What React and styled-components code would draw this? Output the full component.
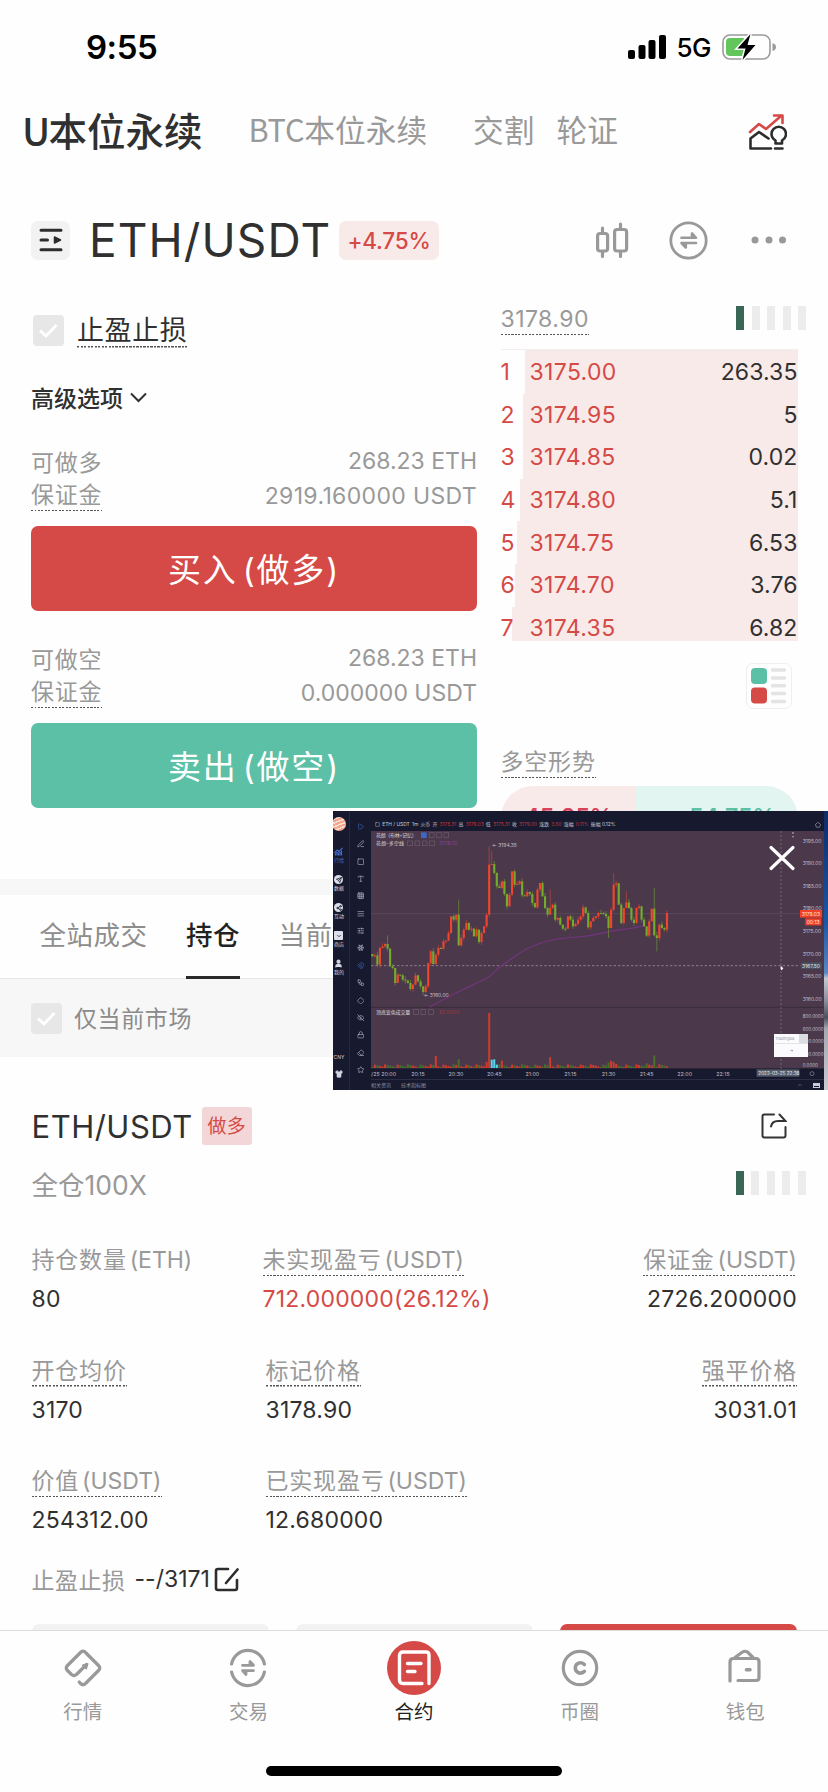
import React from "react";
import styled, { createGlobalStyle } from "styled-components";
import {
  Play, PenLine, Square, Type, Grid3x3, AlignJustify, SlidersHorizontal, Snowflake, Magnet,
  Workflow, Diamond, EyeOff, Lock, Eraser, Star, ChartNoAxesCombined, Send,
  Share2, ChevronDown, User, Shirt, Pentagon, ChevronUp,
} from "lucide-react";

const red = "#d54a46";
const green = "#5bc0a6";
const dark = "#303030";
const gray = "#999999";
const light = "#f7f7f7";
const navy = "#171a2e";

const GlobalStyle = createGlobalStyle`
  * { box-sizing: border-box; }
  body {
    margin: 0;
    background: #fefefe;
    color: ${dark};
    font-family: Inter, "Noto Sans CJK SC", sans-serif;
  }
`;

const Screen = styled.div`
  position: relative;
  width: 828px;
  height: 1792px;
  overflow: hidden;
  display: flex;
  flex-direction: column;
`;

/* ---------- status bar ---------- */
const StatusBar = styled.div`
  height: 94px;
  flex: none;
  padding: 0 52px 0 86px;
  display: flex;
  align-items: center;
  color: #000;
`;
const Clock = styled.div`
  font-size: 33px;
  font-weight: 600;
  letter-spacing: -0.5px;
  flex: 1;
`;
const Network = styled.div`
  font-size: 26px;
  font-weight: 500;
  letter-spacing: -0.5px;
  margin: 1px 11px 0 10px;
`;

/* ---------- market tabs ---------- */
const MarketTabs = styled.div`
  height: 76px;
  flex: none;
  padding: 0 41px 0 22px;
  display: flex;
  align-items: center;
`;
const MarketTab = styled.div`
  font-family: "Noto Sans CJK SC", sans-serif;
  font-size: ${({ $active }) => ($active ? "38.5px" : "30.7px")};
  font-weight: ${({ $active }) => ($active ? 500 : 400)};
  color: ${({ $active }) => ($active ? dark : gray)};
  margin-right: ${({ $gap }) => $gap}px;
  line-height: 50px;
  padding-bottom: 7px;
  white-space: nowrap;
`;
const Narrow = styled.span`
  letter-spacing: ${({ $tight }) => $tight}px;
`;
const Spacer = styled.div`
  flex: 1;
`;

/* ---------- pair header ---------- */
const PairHeader = styled.div`
  height: 130px;
  flex: none;
  padding: 10px 40px 0 31px;
  display: flex;
  align-items: center;
`;
const MenuButton = styled.div`
  width: 39px;
  height: 39px;
  border-radius: 7px;
  background: #f2f2f2;
  display: flex;
  align-items: center;
  justify-content: center;
`;
const PairName = styled.div`
  width: 239px;
  margin: 0 11px 0 19px;
  font-size: 46px;
  line-height: 56px;
  letter-spacing: 1.1px;
  white-space: nowrap;
`;
const Change = styled.div`
  width: 100px;
  height: 39px;
  line-height: 39px;
  border-radius: 7px;
  background: #f9eaea;
  color: ${red};
  font-size: 22.5px;
  font-weight: 500;
  letter-spacing: -0.2px;
  text-align: center;
`;
const HeaderIcons = styled.div`
  display: flex;
  align-items: center;
  gap: 40px;
`;

/* ---------- trade panel ---------- */
const Trade = styled.div`
  height: 579px;
  flex: none;
  padding: 0 22px 0 31px;
  display: flex;
  gap: 23.5px;
`;
const OrderForm = styled.div`
  width: 446px;
  padding-top: 10px;
`;
const Book = styled.div`
  flex: 1;
`;
const CheckRow = styled.div`
  display: flex;
  align-items: center;
  gap: 13px;
  height: 41px;
  padding-left: ${({ $indent }) => $indent || 0}px;
  font-size: ${({ $size }) => $size}px;
  letter-spacing: 0.6px;
`;
const Check = styled.div`
  width: 31px;
  height: 31px;
  border-radius: 4px;
  background: #e7e7e7;
  display: flex;
  align-items: center;
  justify-content: center;
`;
const Dotted = styled.span`
  display: inline-block;
  line-height: ${({ $lh }) => $lh || 30}px;
  padding-bottom: 1px;
  background: repeating-linear-gradient(90deg, #555 0 2px, transparent 2px 3.5px) bottom left / 100% 1.5px no-repeat;
`;
const Unit = styled.span`
  letter-spacing: 0;
  word-spacing: -3.5px;
`;
const Advanced = styled.div`
  display: flex;
  align-items: center;
  gap: 7px;
  height: 40px;
  margin: 26px 0;
  font-size: 23px;
  font-weight: 500;
`;
const Line = styled.div`
  height: 35px;
  display: flex;
  align-items: center;
  justify-content: space-between;
  color: ${gray};
  font-size: 23px;
  letter-spacing: 0.8px;
`;
const Amount = styled.span`
  letter-spacing: ${({ $wide }) => ($wide ? "0.35px" : "0")};
`;
const BigButton = styled.div`
  height: 85px;
  margin: 13px 0 29px;
  padding-bottom: 2px;
  border-radius: 7px;
  background: ${({ $color }) => $color};
  color: #fff;
  font-size: 33px;
  letter-spacing: 1.8px;
  word-spacing: -6px;
  display: flex;
  align-items: center;
  justify-content: center;
`;
const BookTop = styled.div`
  height: 39px;
  display: flex;
  align-items: center;
  justify-content: space-between;
  color: ${gray};
  font-size: 23px;
  letter-spacing: 0.45px;
  div { margin-top: -3px; }
`;
const Meter = styled.div`
  display: flex;
  gap: 7.5px;
  i {
    width: 8px;
    height: 23.5px;
    background: #ececec;
  }
  i:first-child { background: #3a6655; }
`;
const Asks = styled.div`
  width: 297px;
  height: 292px;
  margin-top: 10px;
  overflow: hidden;
  border-top: 1px solid #f2eeee;
`;
const Ask = styled.div`
  height: 42.6px;
  display: flex;
  align-items: center;
  font-size: 23px;
  letter-spacing: 0.1px;
  background: linear-gradient(90deg, transparent ${({ $from }) => $from}px, #f9eaea ${({ $from }) => $from}px);
  &:first-child { height: 43.6px; }
  b {
    width: 29px;
    font-weight: 400;
    color: ${red};
  }
  em {
    flex: 1;
    font-style: normal;
    letter-spacing: 0.35px;
    color: ${red};
  }
`;
const BookMode = styled.div`
  width: 46px;
  height: 46px;
  margin: 22px 0 0 245px;
  border: 1.5px solid #eeeeee;
  border-radius: 7px;
  display: flex;
  align-items: center;
  justify-content: center;
`;
const Trend = styled.div`
  margin-top: 38px;
  color: ${gray};
  font-size: 23px;
  letter-spacing: 0.8px;
`;
const Gauge = styled.div`
  width: 297px;
  height: 64px;
  margin-top: 8px;
  border-radius: 32px;
  overflow: hidden;
  display: flex;
  font-size: 23px;
  font-weight: 600;
  line-height: 62px;
  div {
    flex: 1;
    padding-right: 22px;
    text-align: right;
    background: #e3f5f1;
    color: ${green};
  }
  div:first-child {
    flex: none;
    width: 135px;
    padding: 0 0 0 24px;
    text-align: left;
    background: #f9eaea;
    color: #d5445a;
  }
`;

/* ---------- positions ---------- */
const Tabs = styled.div`
  height: 100px;
  flex: none;
  padding-left: 39.5px;
  border-top: 16px solid ${light};
  border-bottom: 1px solid #e6e6e6;
  display: flex;
  gap: 38.5px;
`;
const Tab = styled.div`
  height: 84px;
  line-height: 80px;
  font-size: 26.5px;
  letter-spacing: 0.5px;
  font-weight: ${({ $active }) => ($active ? 500 : 400)};
  color: ${({ $active }) => ($active ? "#222" : "#8d8d8d")};
  border-bottom: 3px solid ${({ $active }) => ($active ? "#2a2a2a" : "transparent")};
`;
const Filter = styled.div`
  height: 78px;
  flex: none;
  padding: 19px 31px;
  background: ${light};
  color: #8b8b8b;
  span { margin: -3px 0 0 -1px; }
`;
const Position = styled.div`
  flex: 1;
  padding: 41px 31px 0 31.5px;
`;
const PositionHead = styled.div`
  height: 56px;
  display: flex;
  align-items: center;
  padding-right: 10px;
  font-size: 31px;
  letter-spacing: 0.5px;
`;
const Side = styled.div`
  width: 50px;
  height: 38px;
  margin-left: 9px;
  border-radius: 3px;
  background: #f3d6d7;
  color: ${red};
  font-size: 19px;
  line-height: 39px;
  letter-spacing: 0.3px;
  text-align: center;
`;
const Leverage = styled.div`
  height: 58px;
  margin-right: -8.5px;
  display: flex;
  align-items: center;
  justify-content: space-between;
  color: ${gray};
  font-size: 26.5px;
`;
const Stats = styled.div`
  margin-top: 31px;
  display: grid;
  grid-template-columns: 231px 1fr auto;
  grid-auto-rows: 110.7px;
`;
const Stat = styled.div`
  padding-left: ${({ $indent }) => $indent || 0}px;
  text-align: ${({ $right }) => ($right ? "right" : "left")};
  font-size: 23px;
  line-height: 34px;
  letter-spacing: 0.2px;
  color: ${({ $red }) => ($red ? red : dark)};
`;
const StatLabel = styled.div`
  height: 39px;
  color: ${gray};
  letter-spacing: 0.8px;
`;
const StopLine = styled.div`
  height: 34px;
  margin-top: -13px;
  display: flex;
  align-items: center;
  font-size: 23px;
  span {
    color: ${gray};
    margin-right: 9px;
    letter-spacing: 0.5px;
  }
  svg { margin-left: 4px; }
`;
const Actions = styled.div`
  margin-top: 28px;
  display: flex;
  gap: 27px;
  div {
    flex: 1;
    height: 60px;
    border-radius: 7px;
    background: #f2f2f2;
  }
  div:last-child { background: ${red}; }
`;

/* ---------- bottom bar ---------- */
const Nav = styled.div`
  position: absolute;
  left: 0;
  right: 0;
  bottom: 0;
  height: 162px;
  padding-top: 10px;
  background: #fefefe;
  border-top: 1.5px solid #dcdcdc;
  display: grid;
  grid-template-columns: repeat(5, 1fr);
  grid-template-rows: 125px auto;
`;
const NavItem = styled.div`
  display: flex;
  flex-direction: column;
  align-items: center;
  font-size: 19.5px;
  line-height: 34px;
  color: ${({ $active }) => ($active ? "#222" : gray)};
`;
const NavIcon = styled.div`
  width: 54px;
  height: 54px;
  border-radius: 50%;
  background: ${({ $active }) => ($active ? red : "none")};
  display: flex;
  align-items: center;
  justify-content: center;
`;
const HomeBar = styled.div`
  grid-column: 1 / -1;
  justify-self: center;
  width: 296px;
  height: 10px;
  border-radius: 5px;
  background: #000;
`;

/* ---------- floating chart window ---------- */
const Pip = styled.div`
  position: absolute;
  left: 333px;
  top: 811px;
  width: 495px;
  height: 279px;
  overflow: hidden;
  background: ${navy};
  color: #c9cbd8;
  display: flex;
  font-size: 5px;
  line-height: 7px;
`;
const AppRail = styled.div`
  width: 17px;
  flex: none;
  border-right: 1px solid #25283e;
  padding: 6px 4px 0 0;
  display: flex;
  flex-direction: column;
  align-items: center;
`;
const Avatar = styled.div`
  width: 14px;
  height: 14px;
  margin: 0 0 16px -1px;
  border-radius: 50%;
  background: repeating-linear-gradient(160deg, #f2a58c 0 2px, #f9dccb 2px 3.5px);
  flex: none;
`;
const RailItem = styled.div`
  height: 28px;
  display: flex;
  flex-direction: column;
  align-items: center;
  gap: 1px;
  white-space: nowrap;
  color: ${({ $active }) => ($active ? "#4470d8" : "#d4d6e4")};
`;
const RailIcon = styled.div`
  width: 9px;
  height: 9px;
  border-radius: ${({ $round }) => ($round ? "50%" : "1px")};
  background: ${({ $solid }) => ($solid ? "#dcdeea" : "none")};
  color: ${({ $solid }) => ($solid ? navy : "inherit")};
  display: flex;
  align-items: center;
  justify-content: center;
`;
const RailFoot = styled.div`
  margin-top: 67px;
  display: flex;
  flex-direction: column;
  align-items: center;
  gap: 9px;
`;
const ToolRail = styled.div`
  width: 21px;
  flex: none;
  padding-top: 7px;
`;
const Tool = styled.div`
  height: 17.36px;
  display: flex;
  align-items: center;
  justify-content: center;
  color: ${({ $active }) => ($active ? "#3f63b8" : "#b4b7c8")};
`;
const PipMain = styled.div`
  width: 453px;
  flex: none;
`;
const PipTop = styled.div`
  height: 20px;
  padding: 7px 3px 0 4px;
  display: flex;
  align-items: center;
  gap: 2.2px;
  font-size: 4.9px;
  white-space: nowrap;
  span, b { flex: none; }
  b {
    font-weight: 400;
    color: #c33338;
  }
  svg:last-child { margin-left: auto; }
`;
const PipFoot = styled.div`
  height: 11px;
  padding: 0 4px 0 0;
  border-top: 1px solid #2b2e44;
  display: flex;
  align-items: center;
  gap: 10px;
  color: #8b8ea0;
`;
const FootPanel = styled.div`
  width: 7px;
  height: 5px;
  border: 1px solid #c9cbd8;
  border-top-width: 3px;
`;
const Wallpaper = styled.div`
  flex: 1;
  background: linear-gradient(#0f2b66 0, #1d56a6 40%, #5c86bd 58%, #c5c8d0 60%, #8b8f9c 68%, #4c4f5e 74%, #a6a8b2 78%, #c9cad0 100%);
`;
const Close = styled.svg`
  position: absolute;
  left: 435px;
  top: 34px;
`;
const Note = styled.div`
  position: absolute;
  left: 441px;
  top: 223px;
  width: 34px;
  height: 23px;
  background: linear-gradient(90deg, transparent 25px, #dcdce3 25px) top / 100% 9px no-repeat #fbfbfd;
  color: #9a9aa5;
  font-size: 4px;
  line-height: 9px;
  padding-left: 1px;
  p {
    margin: 0;
    text-align: center;
    line-height: 13px;
    border-top: 1px solid #e2e2e8;
    color: #555;
  }
`;

const asks = [
  [1, "3175.00", "263.35", 24],
  [2, "3174.95", "5", 22],
  [3, "3174.85", "0.02", 22],
  [4, "3174.80", "5.1", 19],
  [5, "3174.75", "6.53", 16],
  [6, "3174.70", "3.76", 14],
  [7, "3174.35", "6.82", 11],
];

// closing level of every one minute bar, in chart units from the top
const closes = [
  455, 452, 480, 430, 425, 418, 432, 485, 490, 535, 510, 512, 525, 528, 535, 553, 540, 512, 530, 545,
  562, 545, 475, 440, 478, 450, 430, 432, 410, 408, 385, 335, 345, 330, 422, 400, 375, 355, 375, 372,
  395, 375, 412, 385, 365, 330, 180, 178, 205, 245, 250, 230, 268, 305, 270, 200, 240, 238, 230, 272,
  275, 262, 268, 295, 308, 255, 235, 275, 310, 330, 310, 300, 345, 340, 360, 372, 372, 335, 345, 365,
  358, 345, 335, 308, 325, 368, 350, 340, 335, 325, 325, 328, 335, 370, 315, 240, 236, 300, 355, 310,
  293, 310, 345, 355, 310, 305, 345, 365, 393, 350, 312, 392, 400, 360, 370, 375, 325,
];
const highs = { 6: 392, 34: 285, 46: 125, 47: 140, 70: 255, 95: 205, 100: 260, 111: 250 };
const lows = { 20: 572, 93: 400, 112: 440 };
const volumes = { 25: 36, 34: 26, 46: 165, 45: 18, 47: 25, 48: 26, 49: 10, 51: 22, 70: 32, 93: 16, 94: 22, 95: 18, 96: 12, 111: 38, 108: 14 };
const cyanBars = [47, 48, 49];
const step = 7.62;

const prices = ["3195.00", "3190.00", "3185.00", "3180.00", "3175.00", "3170.00", "3165.00", "3160.00"];
const volumeTicks = [["800.0000", 633], ["600.0000", 672], ["400.0000", 710], ["200.0000", 749], ["0.0000", 780]];
const times = [["3/25 20:00", 157], ["20:15", 265], ["20:30", 379], ["20:45", 494], ["21:00", 608], ["21:15", 722], ["21:30", 837], ["21:45", 951], ["22:00", 1065], ["22:15", 1180]];

function CheckMark() {
  return (
    <Check>
      <svg width="19" height="16" viewBox="0 0 19 16" fill="none" stroke="#fff" strokeWidth="2.8">
        <path d="M1 7.5 L7 13 L17.5 2" />
      </svg>
    </Check>
  );
}

function Signal() {
  return <Meter><i /><i /><i /><i /><i /></Meter>;
}

function Candles() {
  return closes.map((close, i) => {
    const open = i ? closes[i - 1] : 448;
    const up = close < open;
    const color = up ? "#ee452c" : "#74ab2b";
    const top = Math.min(open, close);
    const bottom = Math.max(open, close);
    const x = 128 + i * step;
    const vol = volumes[i] || 3 + ((i * 7) % 9);
    return (
      <g key={i}>
        <path
          d={`M${x} ${highs[i] || top - ((i * 5) % 11)} V${lows[i] || bottom + ((i * 3) % 10)}`}
          stroke={color}
          strokeWidth="1.6"
        />
        <rect x={x - 3.2} y={top} width="6.4" height={Math.max(bottom - top, 3)} fill={color} />
        <rect x={x - 3} y={790 - vol} width="6" height={vol} fill={cyanBars.includes(i) ? "#59d8ee" : up ? "#d23a2a" : "#47702c"} />
      </g>
    );
  });
}

function Chart() {
  return (
    <svg width="453" height="248" viewBox="124 79 1359 744" fontSize="16" fontFamily='Inter, "Noto Sans CJK SC", sans-serif' fill="#c3bcc6" display="block">
      <rect x="124" y="79" width="1359" height="713" fill="#4b394b" />
      <rect x="124" y="792" width="1359" height="31" fill={navy} />
      <path d="M124 608 H1483" stroke="#3a2c3c" strokeWidth="3" />
      <path d="M124 327 H1412" stroke="#5f5060" strokeWidth="2" />
      <path d="M124 483 H1412" stroke="#978b98" strokeWidth="2.5" strokeDasharray="7 6" />
      <path d="M1354 79 V792" stroke="#8a7f8c" strokeWidth="2" strokeDasharray="6 6" />
      <path
        d="M300 607 C340 585 360 575 385 562 S455 530 472 520 S500 492 520 480 S570 440 610 424 S680 401 745 397 S810 383 874 375 S920 368 944 362"
        fill="none"
        stroke="#74347e"
        strokeWidth="3.5"
      />
      <Candles />

      <g fontSize="15" fill="#dcd8df">
        <text x="139" y="96" textLength="122">花颜（布林+记忆）</text>
        <text x="139" y="121" textLength="84">花颜-多空线</text>
        <text x="139" y="627" textLength="103">顶底变色成交量</text>
      </g>
      <rect x="274" y="83" width="17" height="17" fill="#3e68c8" />
      <g fill="none" stroke="#6c5d6d" strokeWidth="2">
        {[299, 321, 343].map((x) => <rect key={x} x={x} y="84" width="14" height="14" />)}
        {[234, 256, 278, 300].map((x) => <rect key={x} x={x} y="109" width="14" height="14" />)}
        {[252, 274, 297].map((x) => <rect key={x} x={x} y="615" width="14" height="14" />)}
      </g>
      <text x="328" y="121" fill="#8a3c9a" fontSize="15">3178.02</text>
      <text x="328" y="627" fill="#a23338" fontSize="15">82.0000</text>
      <text x="487" y="128" fontSize="15">← 3194.35</text>
      <text x="282" y="576" fontSize="15">← 3160.00</text>

      {prices.map((p, i) => <text key={p} x="1419" y={114 + i * 67.8} fontSize="15">{p}</text>)}
      {volumeTicks.map(([label, y]) => (
        <text key={label} x="1419" y={y + 6} fontSize="13.5">{label}</text>
      ))}
      {times.map(([label, x]) => <text key={label} x={x} y="814" textAnchor="middle">{label}</text>)}

      <rect x="1411" y="316" width="66" height="23" fill="#f0402a" />
      <text x="1416" y="333" fill="#ffe6df" fontSize="15">3179.03</text>
      <rect x="1427" y="341" width="48" height="21" fill="#f0402a" />
      <text x="1431" y="357" fill="#ffe6df" fontSize="15">00:13</text>
      <rect x="1414" y="473" width="62" height="20" fill="#4a5060" />
      <text x="1417" y="489" fill="#e5e5ea" fontSize="15">3167.50</text>
      <rect x="1281" y="794" width="128" height="22" fill="#555b69" />
      <text x="1286" y="811" fill="#eceef2" fontSize="14">2022-03-25 22:38</text>
      <circle cx="1447" cy="807" r="6" fill="none" stroke="#8b8ea0" strokeWidth="2" />
      <path d="M1390 83 V98" stroke="#c3bcc6" strokeWidth="4" strokeDasharray="4 7" />
      <path d="M1353 483 L1361 491 L1356 497 L1353 494 Z" fill="#fff" />
    </svg>
  );
}

const tools = [Play, PenLine, Square, Type, Grid3x3, AlignJustify, SlidersHorizontal, Snowflake, Magnet, Workflow, Diamond, EyeOff, Lock, Eraser, Star];
const railItems = [
  { Icon: ChartNoAxesCombined, label: "行情" },
  { Icon: Send, label: "数据", solid: true, round: true },
  { Icon: Share2, label: "互动", solid: true, round: true },
  { Icon: ChevronDown, label: "商店", solid: true },
  { Icon: User, label: "我的", fill: "#dcdeea" },
];

function FloatingChart() {
  return (
    <Pip>
      <AppRail>
        <Avatar />
        {railItems.map(({ Icon, label, solid, round, fill }, i) => (
          <RailItem key={label} $active={i === 0}>
            <RailIcon $solid={solid} $round={round}>
              <Icon size={solid ? 6 : 9} strokeWidth={3} fill={fill || "none"} />
            </RailIcon>
            {label}
          </RailItem>
        ))}
        <RailFoot>
          CNY
          <Shirt size={8} fill="#d4d6e4" />
        </RailFoot>
      </AppRail>
      <ToolRail>
        {tools.map((Icon, i) => (
          <Tool key={i} $active={i === 0 || i === 8}><Icon size={7.5} /></Tool>
        ))}
      </ToolRail>
      <PipMain>
        <PipTop>
          <Square size={5} /> <span>ETH / USDT</span> <span>1m</span> <span>火币</span>
          <span>开</span> <b>3175.31</b> <span>高</span> <b>3179.03</b> <span>低</span> <b>3175.31</b>
          <span>收</span> <b>3179.00</b> <span>涨跌</span> <b>3.50</b> <span>涨幅</span> <b>0.11%</b> <span>振幅 0.12%</span>
          <Pentagon size={6} />
        </PipTop>
        <Chart />
        <PipFoot>
          <span>相关资讯</span>
          <span>技术指标图</span>
          <Spacer />
          <ChevronUp size={6} />
          <FootPanel />
        </PipFoot>
      </PipMain>
      <Wallpaper />
      <Note>TradingBa<p>→</p></Note>
      <Close width="28" height="26" viewBox="0 0 28 26" stroke="#fff" strokeWidth="3.2" strokeLinecap="round">
        <path d="M3 2.5 L25 23.5 M25 2.5 L3 23.5" />
      </Close>
    </Pip>
  );
}

function BottomNav() {
  return (
    <Nav>
      <NavItem>
        <NavIcon>
          <svg width="40" height="40" viewBox="0 0 40 40" fill="none" stroke={gray} strokeWidth="3.2" strokeLinecap="round" strokeLinejoin="round">
            <path d="M23.5 16.5 L13.5 26.5 Q11 28.5 8.5 26.5 L4 22 Q2.5 20 4 18 L18 4 Q20 2.2 22 4 L36 18 Q37.5 20 36 22 L22.5 35.5 Q20 38 17.5 35.5 L16.3 34" />
            <path d="M19.5 17 L25 15.5 L23.5 21 Z" fill={gray} strokeWidth="1" />
          </svg>
        </NavIcon>
        行情
      </NavItem>
      <NavItem>
        <NavIcon>
          <svg width="40" height="40" viewBox="0 0 40 40" fill="none" stroke={gray} strokeWidth="3.2" strokeLinecap="round" strokeLinejoin="round">
            <path d="M3.6 16 A16.7 16.7 0 0 1 36.4 16 M3.6 24 A16.7 16.7 0 0 0 36.4 24" />
            <path d="M14.5 17.3 H25.5 L22 13.5 V17 M25.5 22.6 H14.5 L18 26.5 V23" strokeWidth="2.8" />
          </svg>
        </NavIcon>
        交易
      </NavItem>
      <NavItem $active>
        <NavIcon $active>
          <svg width="38" height="38" viewBox="0 0 38 38" fill="none" stroke="#fff" strokeWidth="3.4" strokeLinecap="round" strokeLinejoin="round">
            <path d="M34 34.5 V6 Q34 3 31 3 H8 Q4.5 3 4.5 6.5 V31 Q4.5 34.5 8 34.5 H27" />
            <path d="M12.5 14.5 H26 M12.5 22.5 H20" />
          </svg>
        </NavIcon>
        合约
      </NavItem>
      <NavItem>
        <NavIcon>
          <svg width="40" height="40" viewBox="0 0 40 40" fill="none" stroke={gray}>
            <circle cx="20" cy="20" r="16.7" strokeWidth="3.2" />
            <path d="M24.4 16.5 A5.2 5.2 0 1 0 24.4 23.3" strokeWidth="3.6" strokeLinecap="round" />
          </svg>
        </NavIcon>
        币圈
      </NavItem>
      <NavItem>
        <NavIcon>
          <svg width="40" height="40" viewBox="0 0 40 40" fill="none" stroke={gray} strokeWidth="3.2" strokeLinecap="round" strokeLinejoin="round">
            <path d="M5 33 V14 Q5 10.5 8.5 10.5 H31 Q34 10.5 34 14 V29.5 Q34 32.5 31 32.5 H13" />
            <path d="M10 9.5 L17.5 4 Q20 2.5 22.5 4 L28 9.5" />
            <path d="M21.5 21.8 H25" strokeWidth="3.6" />
          </svg>
        </NavIcon>
        钱包
      </NavItem>
      <HomeBar />
    </Nav>
  );
}

function App() {
  return (
    <Screen>
      <GlobalStyle />
      <StatusBar>
        <Clock>9:55</Clock>
        <svg width="38" height="24" viewBox="0 0 38 24">
          <rect x="0" y="15" width="7" height="9" rx="2" />
          <rect x="10.5" y="10" width="7" height="14" rx="2" />
          <rect x="20.5" y="5" width="7" height="19" rx="2" />
          <rect x="31" y="0" width="7" height="24" rx="2" />
        </svg>
        <Network>5G</Network>
        <svg width="54" height="28" viewBox="0 0 54 28">
          <rect x="1" y="2" width="47" height="24" rx="7" fill="none" stroke="#9b9b9b" strokeWidth="1.6" />
          <path d="M50.5 10 Q54 11 54 14 Q54 17 50.5 18 Z" fill="#9b9b9b" />
          <path d="M8 5 H22 V23 H8 Q4 23 4 19 V9 Q4 5 8 5 Z" fill="#62c65c" />
          <path d="M28.5 1 L15.5 15.5 H23.5 L20.5 27 L33.5 12 H25.5 Z" stroke="#fff" strokeWidth="3" />
          <path d="M28.5 1 L15.5 15.5 H23.5 L20.5 27 L33.5 12 H25.5 Z" />
        </svg>
      </StatusBar>

      <MarketTabs>
        <MarketTab $active $gap={46}><Narrow $tight={-1.8}>U</Narrow>本位永续</MarketTab>
        <MarketTab $gap={46}><Narrow $tight={-0.2}>BTC</Narrow>本位永续</MarketTab>
        <MarketTab $gap={22}>交割</MarketTab>
        <MarketTab $gap={0}>轮证</MarketTab>
        <Spacer />
        <svg width="39" height="38" viewBox="0 0 39 38" fill="none" strokeWidth="2.6" strokeLinecap="round" strokeLinejoin="round">
          <path d="M2 19 L11 11 L18 16 L33 3" stroke={red} />
          <path d="M26 2.5 H34.5 V10" stroke={red} />
          <path d="M23 35.5 H2.5 V25.5 L11 19 L20.5 25.5 M27 35.5 H34.5" stroke="#2c2c2c" />
          <path d="M27.5 30.5 V27.5 Q23.5 25 23.5 21 A7.2 7.2 0 0 1 38 21 Q38 25 34 27.5 V30.5 Z" stroke="#2c2c2c" />
        </svg>
      </MarketTabs>

      <PairHeader>
        <MenuButton>
          <svg width="24" height="24" viewBox="0 0 24 24" stroke="#2d2d2d" strokeWidth="3" strokeLinecap="round">
            <path d="M2 2.3 H22 M2 12 H8.5 M2 21.7 H22" />
            <path d="M15.5 9 V15 L21.5 12 Z" fill="#2d2d2d" strokeWidth="1.5" strokeLinejoin="round" />
          </svg>
        </MenuButton>
        <PairName>ETH/USDT</PairName>
        <Change>+4.75%</Change>
        <Spacer />
        <HeaderIcons>
          <svg width="34" height="38" viewBox="0 0 34 38" fill="none" stroke={gray} strokeWidth="3.2" strokeLinecap="round">
            <rect x="2.6" y="12.5" width="10" height="17.5" rx="2.5" />
            <rect x="19.6" y="8.5" width="12" height="21.5" rx="2.5" />
            <path d="M7.5 7 V11 M7.5 31 V35.5 M25.5 3 V7 M25.5 31 V35.5" />
          </svg>
          <svg width="39" height="39" viewBox="0 0 39 39" fill="none" stroke={gray} strokeWidth="2.8" strokeLinecap="round" strokeLinejoin="round">
            <circle cx="19.5" cy="19.5" r="17.7" />
            <path d="M12.5 16.8 H27 L23 12.5 V16 M27 22 H12.5 M16.8 22.5 V26.5 L12.5 22" strokeWidth="2.6" />
          </svg>
          <svg width="40" height="8" viewBox="-4 0 40 8" fill={gray}>
            <circle cx="3" cy="4" r="3.5" />
            <circle cx="17" cy="4" r="3.5" />
            <circle cx="30.5" cy="4" r="3.5" />
          </svg>
        </HeaderIcons>
      </PairHeader>

      <Trade>
        <OrderForm>
          <CheckRow $size={27} $indent={2}>
            <CheckMark />
            <Dotted $lh={33}>止盈止损</Dotted>
          </CheckRow>
          <Advanced>
            高级选项
            <svg width="17" height="11" viewBox="0 0 17 11" fill="none" stroke={dark} strokeWidth="2"><path d="M1 1.5 L8.5 9 L16 1.5" /></svg>
          </Advanced>
          <Line>可做多<Amount>268.23 ETH</Amount></Line>
          <Line><Dotted>保证金</Dotted><Amount $wide>2919.160000 USDT</Amount></Line>
          <BigButton $color={red}>买入 (做多)</BigButton>
          <Line>可做空<Amount>268.23 ETH</Amount></Line>
          <Line><Dotted>保证金</Dotted><Amount>0.000000 USDT</Amount></Line>
          <BigButton $color={green}>卖出 (做空)</BigButton>
        </OrderForm>
        <Book>
          <BookTop>
            <Dotted>3178.90</Dotted>
            <Signal />
          </BookTop>
          <Asks>
            {asks.map(([n, price, amount, from]) => (
              <Ask key={n} $from={from}><b>{n}</b><em>{price}</em>{amount}</Ask>
            ))}
          </Asks>
          <BookMode>
            <svg width="36" height="37" viewBox="0 0 36 37">
              <rect x="0" y="0" width="16" height="16" rx="4" fill={green} />
              <rect x="0" y="19.5" width="16" height="16" rx="4" fill={red} />
              <path d="M21.5 2 H33.5 M21.5 10 H33.5 M21.5 17.7 H33.5 M21.5 25.5 H33.5 M21.5 33.5 H33.5" stroke="#e4e4e4" strokeWidth="3.4" strokeLinecap="round" />
            </svg>
          </BookMode>
          <Trend><Dotted>多空形势</Dotted></Trend>
          <Gauge><div>45.25%</div><div>54.75%</div></Gauge>
        </Book>
      </Trade>

      <Tabs>
        <Tab>全站成交</Tab>
        <Tab $active>持仓</Tab>
        <Tab>当前委托</Tab>
      </Tabs>
      <Filter>
        <CheckRow $size={23}>
          <CheckMark />
          <span>仅当前市场</span>
        </CheckRow>
      </Filter>

      <Position>
        <PositionHead>
          ETH/USDT
          <Side>做多</Side>
          <Spacer />
          <svg width="26" height="26" viewBox="0 0 26 26" fill="none" stroke="#333" strokeWidth="2" strokeLinecap="round">
            <path d="M13 1.5 H3.5 Q1.5 1.5 1.5 3.5 V22.5 Q1.5 24.5 3.5 24.5 H22.5 Q24.5 24.5 24.5 22.5 V14" />
            <path d="M10 13.5 Q11 8 17 8 H24.5 L18.5 1.5" />
          </svg>
        </PositionHead>
        <Leverage>全仓100X<Signal /></Leverage>
        <Stats>
          <Stat><StatLabel>持仓数量<Unit> (ETH)</Unit></StatLabel>80</Stat>
          <Stat $red><StatLabel><Dotted>未实现盈亏<Unit> (USDT)</Unit></Dotted></StatLabel>712.000000(26.12%)</Stat>
          <Stat $right><StatLabel><Dotted>保证金<Unit> (USDT)</Unit></Dotted></StatLabel>2726.200000</Stat>
          <Stat><StatLabel><Dotted>开仓均价</Dotted></StatLabel>3170</Stat>
          <Stat $indent={3}><StatLabel><Dotted>标记价格</Dotted></StatLabel>3178.90</Stat>
          <Stat $right><StatLabel><Dotted>强平价格</Dotted></StatLabel>3031.01</Stat>
          <Stat><StatLabel><Dotted>价值<Unit> (USDT)</Unit></Dotted></StatLabel>254312.00</Stat>
          <Stat $indent={3}><StatLabel><Dotted>已实现盈亏<Unit> (USDT)</Unit></Dotted></StatLabel>12.680000</Stat>
        </Stats>
        <StopLine>
          <span>止盈止损</span>--/3171
          <svg width="25" height="25" viewBox="0 0 25 25" fill="none" stroke="#2d2d2d" strokeWidth="2.6" strokeLinecap="round">
            <path d="M14 2 H4 Q2 2 2 4 V21 Q2 23 4 23 H21 Q23 23 23 21 V13" />
            <path d="M12 16 L23.5 2.5" />
          </svg>
        </StopLine>
        <Actions><div /><div /><div /></Actions>
      </Position>

      <BottomNav />
      <FloatingChart />
    </Screen>
  );
}

export default App;
